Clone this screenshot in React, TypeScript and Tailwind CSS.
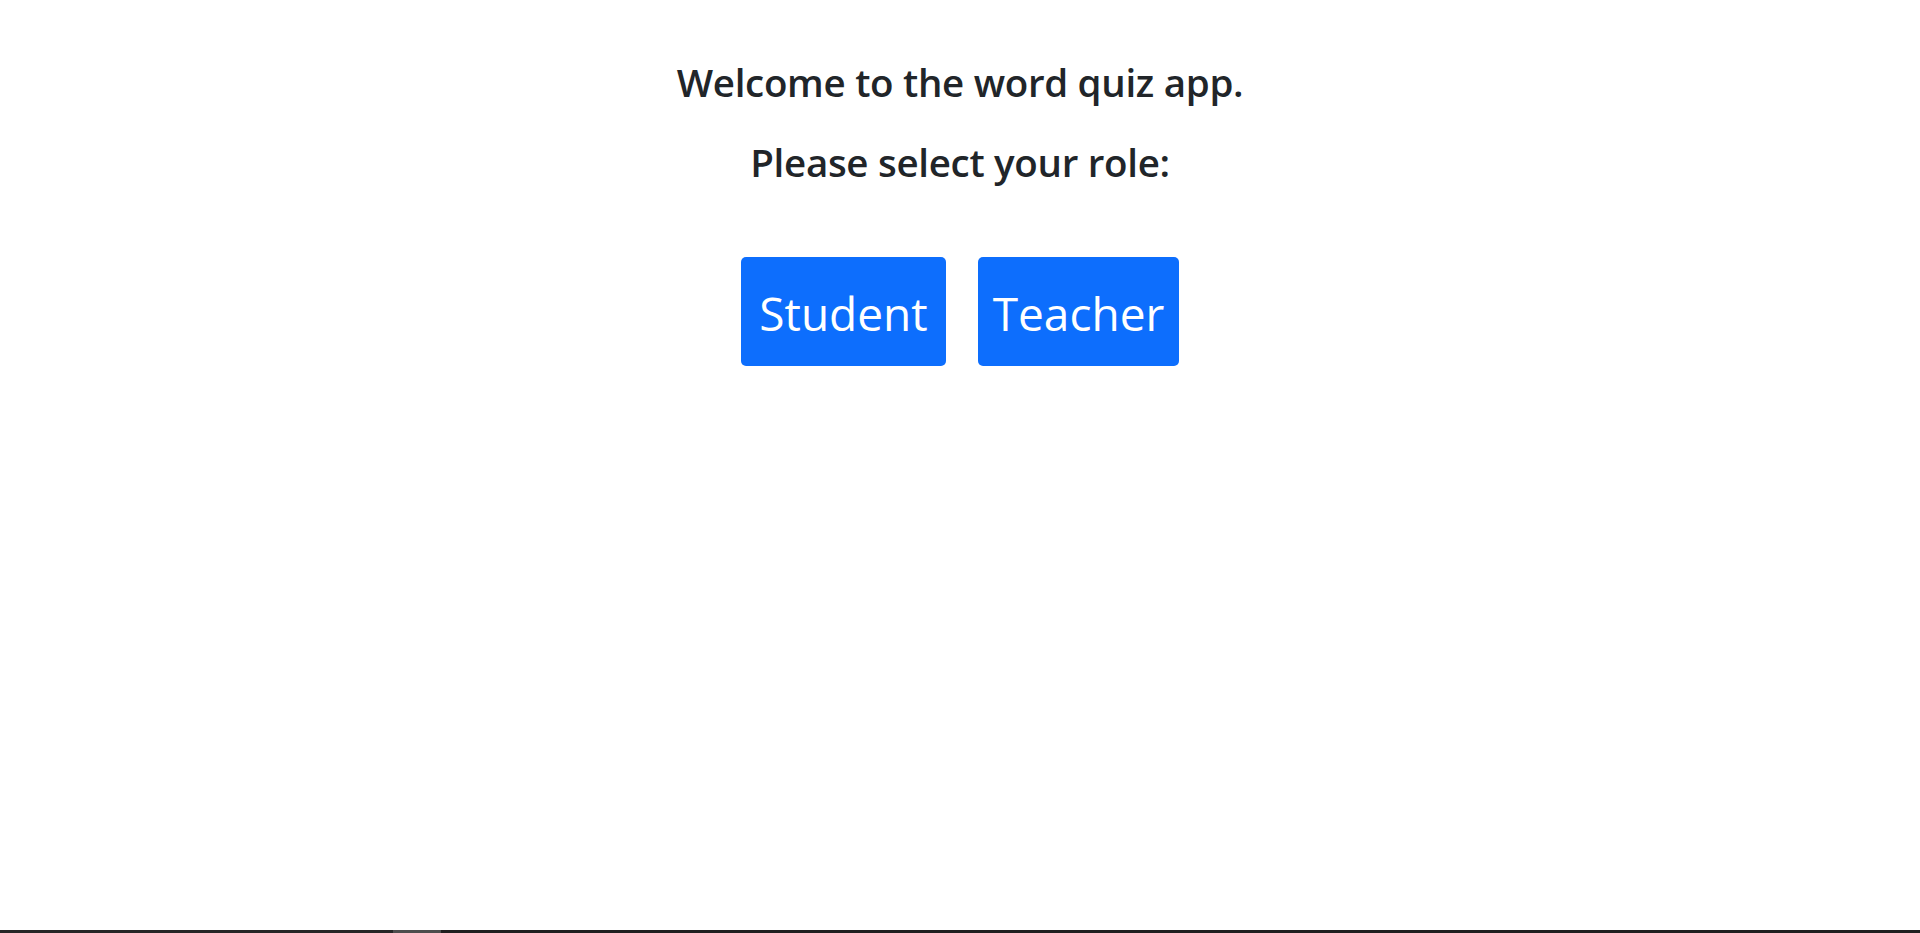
export default function App() {
  return (
    <div className="h-screen w-full bg-white flex flex-col font-['Open_Sans',sans-serif] text-[#212529]">
      <main className="flex-1 flex flex-col items-center">
        {/* Welcome text */}
        <h3 className="mt-[59px] text-[38.5px] leading-[47px] font-semibold tracking-[-0.3px]">
          Welcome to the word quiz app.
        </h3>
        <h3 className="mt-[33px] text-[38.5px] leading-[47px] font-semibold tracking-[-0.3px]">
          Please select your role:
        </h3>

        {/* Role buttons */}
        <div className="mt-[71px] flex gap-[32px]">
          <button className="w-[205px] h-[109px] rounded-[5px] bg-[#0d6efd] text-white text-[46px] leading-none pt-[2px] flex items-center justify-center">
            Student
          </button>
          <button className="w-[201px] h-[109px] rounded-[5px] bg-[#0d6efd] text-white text-[46px] leading-none pt-[2px] flex items-center justify-center">
            Teacher
          </button>
        </div>
      </main>

      {/* bottom edge */}
      <div className="h-[3px] flex">
        <div className="w-[393px] bg-[#262626]"></div>
        <div className="w-[48px] bg-[#4d4d4d]"></div>
        <div className="flex-1 bg-[#1f1f1f]"></div>
      </div>
    </div>
  )
}
